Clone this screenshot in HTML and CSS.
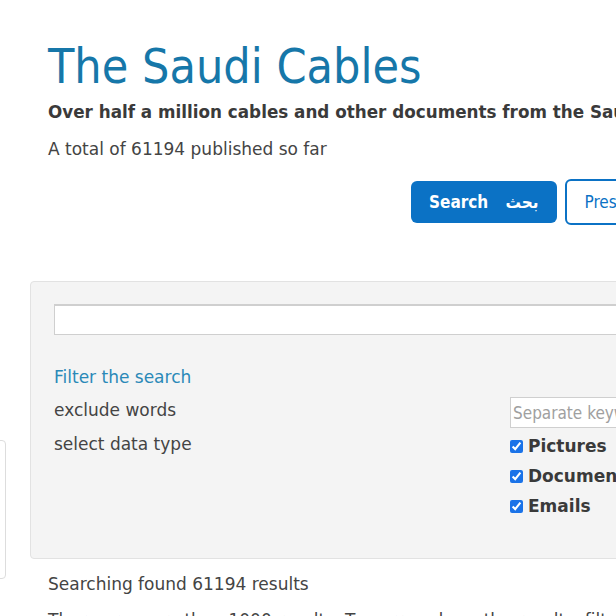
FILE: index.html
```html
<!DOCTYPE html>
<html lang="en">
<head>
  <meta charset="UTF-8">
  <meta name="viewport" content="width=device-width, initial-scale=1.0">
  <title>The Saudi Cables</title>
  <link rel="stylesheet" href="styles.css">
</head>
<body>
  <div class="page">
    <header class="intro">
      <h1>The Saudi Cables</h1>
      <p class="lead">Over half a million cables and other documents from the Saudi Foreign Ministry</p>
      <p class="count">A total of 61194 published so far</p>
    </header>

    <div class="actions">
      <button class="btn btn-primary">Search <span class="ar" lang="ar" dir="rtl">بحث</span></button>
      <button class="btn btn-outline">Press release</button>
    </div>

    <div class="search-row">
      <aside class="side-box"></aside>
      <form class="search-panel">
        <input type="text" class="query">
        <h3 class="filter-title">Filter the search</h3>
        <div class="filter-grid">
          <label for="exclude">exclude words</label>
          <input type="text" id="exclude" class="exclude" placeholder="Separate keywords by comma">
          <label>select data type</label>
          <div class="types">
            <label class="type"><input type="checkbox" checked> Pictures</label>
            <label class="type"><input type="checkbox" checked> Documents</label>
            <label class="type"><input type="checkbox" checked> Emails</label>
          </div>
        </div>
      </form>
    </div>

    <div class="results">
      <p>Searching found 61194 results</p>
      <p class="note">There are more than 1000 results. To narrow down the results, filter the search</p>
    </div>
  </div>
</body>
</html>
```

FILE: styles.css
```css
html, body {
  margin: 0;
  padding: 0;
  overflow: hidden;
  background: #fff;
}
body {
  font-family: "DejaVu Sans", Verdana, sans-serif;
  color: #444;
  font-size: 17px;
}
.page {
  width: 1000px;
  padding-top: 38px;
}
.intro {
  padding-left: 48px;
}
.intro h1 {
  margin: 0;
  font-family: "DejaVu Sans Condensed", "DejaVu Sans", sans-serif;
  font-stretch: condensed;
  font-size: 48px;
  line-height: 56px;
  font-weight: normal;
  color: #1677a9;
}
.lead {
  margin: 6px 0 0;
  font-size: 16.8px;
  line-height: 24px;
  font-weight: bold;
  color: #3a3a3a;
  white-space: nowrap;
}
.count {
  margin: 13px 0 0;
  line-height: 24px;
}
.actions {
  display: flex;
  align-items: center;
  gap: 8px;
  margin: 18px 0 0 411px;
}
.btn {
  font-family: "DejaVu Sans Condensed", "DejaVu Sans", sans-serif;
  font-stretch: condensed;
  font-size: 17px;
  border-radius: 6px;
  cursor: pointer;
}
.btn-primary {
  height: 42px;
  padding: 0 18px;
  background: #0b72c5;
  border: none;
  color: #fff;
  font-weight: bold;
}
.btn-primary .ar {
  margin-left: 12px;
}
.btn-outline {
  height: 46px;
  padding: 0 18px;
  background: #fff;
  border: 2px solid #0b72c5;
  color: #0b72c5;
}
.search-row {
  display: flex;
  align-items: flex-start;
  gap: 24px;
  margin-top: 56px;
}
.side-box {
  flex: none;
  width: 40px;
  height: 137px;
  margin: 159px 0 -60px -36px;
  background: #fff;
  border: 1px solid #ddd;
  border-radius: 4px;
}
.search-panel {
  flex: 1;
  padding: 22px 23px 37px;
  background: #f4f4f4;
  border: 1px solid #e2e2e2;
  border-radius: 4px;
}
.query {
  display: block;
  box-sizing: border-box;
  width: 100%;
  height: 31px;
  margin: 0;
  background: #fff;
  border: 1px solid #cfcfcf;
  border-top-width: 2px;
}
.filter-title {
  margin: 30px 0 0;
  font-size: 17px;
  line-height: 24px;
  font-weight: normal;
  color: #2a89b8;
}
.filter-grid {
  display: grid;
  grid-template-columns: 456px 1fr;
  row-gap: 3px;
  margin-top: 8px;
}
.filter-grid > label {
  padding-top: 1px;
  line-height: 24px;
}
.exclude {
  box-sizing: border-box;
  width: 100%;
  height: 31px;
  margin: 0;
  padding: 0 2px;
  font-family: "DejaVu Sans Condensed", "DejaVu Sans", sans-serif;
  font-stretch: condensed;
  font-size: 17px;
  background: #fff;
  border: 1px solid #cfcfcf;
}
.exclude::placeholder {
  color: #a0a0a0;
}
.types {
  display: flex;
  flex-direction: column;
}
.type {
  display: flex;
  align-items: center;
  gap: 5px;
  height: 30px;
  font-weight: bold;
  color: #3a3a3a;
}
.type input {
  width: 13px;
  height: 13px;
  margin: 1px 0 0;
  accent-color: #1b73e8;
}
.results {
  padding-left: 48px;
  margin-top: 13px;
}
.results p {
  margin: 0;
  line-height: 24px;
}
.results .note {
  margin-top: 12px;
}
```
